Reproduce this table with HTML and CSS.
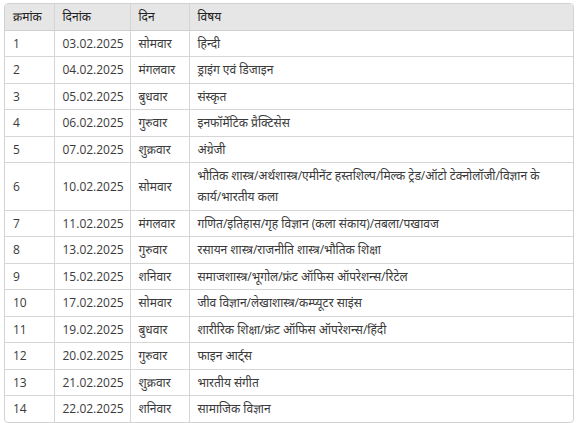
FILE: index.html
```html
<!DOCTYPE html>
<html lang="hi">
<head>
<meta charset="utf-8">
<title>परीक्षा कार्यक्रम</title>
<link rel="stylesheet" href="styles.css">
</head>
<body>
<div class="wrap">
<table class="exam">
<colgroup>
<col class="c1"><col class="c2"><col class="c3"><col class="c4">
</colgroup>
<thead>
<tr><th>क्रमांक</th><th>दिनांक</th><th>दिन</th><th>विषय</th></tr>
</thead>
<tbody>
<tr><td>1</td><td>03.02.2025</td><td>सोमवार</td><td>हिन्दी</td></tr>
<tr><td>2</td><td>04.02.2025</td><td>मंगलवार</td><td>ड्राइंग एवं डिजाइन</td></tr>
<tr><td>3</td><td>05.02.2025</td><td>बुधवार</td><td>संस्कृत</td></tr>
<tr><td>4</td><td>06.02.2025</td><td>गुरुवार</td><td>इनफॉर्मेटिक प्रैक्टिसेस</td></tr>
<tr><td>5</td><td>07.02.2025</td><td>शुक्रवार</td><td>अंग्रेजी</td></tr>
<tr><td>6</td><td>10.02.2025</td><td>सोमवार</td><td>भौतिक शास्त्र/अर्थशास्त्र/एमीनेंट हस्तशिल्प/मिल्क ट्रेड/ऑटो टेक्नोलॉजी/विज्ञान के कार्य/भारतीय कला</td></tr>
<tr><td>7</td><td>11.02.2025</td><td>मंगलवार</td><td>गणित/इतिहास/गृह विज्ञान (कला संकाय)/तबला/पखावज</td></tr>
<tr><td>8</td><td>13.02.2025</td><td>गुरुवार</td><td>रसायन शास्त्र/राजनीति शास्त्र/भौतिक शिक्षा</td></tr>
<tr><td>9</td><td>15.02.2025</td><td>शनिवार</td><td>समाजशास्त्र/भूगोल/फ्रंट ऑफिस ऑपरेशन्स/रिटेल</td></tr>
<tr><td>10</td><td>17.02.2025</td><td>सोमवार</td><td>जीव विज्ञान/लेखाशास्त्र/कम्प्यूटर साइंस</td></tr>
<tr><td>11</td><td>19.02.2025</td><td>बुधवार</td><td>शारीरिक शिक्षा/फ्रंट ऑफिस ऑपरेशन्स/हिंदी</td></tr>
<tr><td>12</td><td>20.02.2025</td><td>गुरुवार</td><td>फाइन आर्ट्स</td></tr>
<tr><td>13</td><td>21.02.2025</td><td>शुक्रवार</td><td>भारतीय संगीत</td></tr>
<tr><td>14</td><td>22.02.2025</td><td>शनिवार</td><td>सामाजिक विज्ञान</td></tr>
</tbody>
</table>
</div>
</body>
</html>
```

FILE: styles.css
```css
html, body {
  margin: 0;
  padding: 0;
  background: #ffffff;
}
body {
  padding: 3px 4px 0 4px;
  font-family: "Open Sans", "Noto Sans Devanagari", "Noto Sans", "Lohit Devanagari", sans-serif;
  font-size: 12px;
  color: #3a3a3a;
}
.wrap {
  width: 570px;
  border: 1px solid #d2d2d2;
  border-radius: 4px;
  overflow: hidden;
  box-sizing: border-box;
}
.exam {
  width: 100%;
  border-collapse: collapse;
  table-layout: fixed;
}
.c1 { width: 49px; }
.c2 { width: 76px; }
.c3 { width: 59px; }
.exam th, .exam td {
  text-align: left;
  vertical-align: middle;
  padding: 2.25px 8px;
  line-height: 21px;
  border-left: 1px solid #d6d6d6;
  border-top: 1px solid #d6d6d6;
}
.exam th:first-child, .exam td:first-child { border-left: none; }
.exam thead th {
  border-top: none;
  background: #e6e6e6;
  font-weight: normal;
  color: #222;
  border-bottom: 1px solid #cfcfcf;
}
```
